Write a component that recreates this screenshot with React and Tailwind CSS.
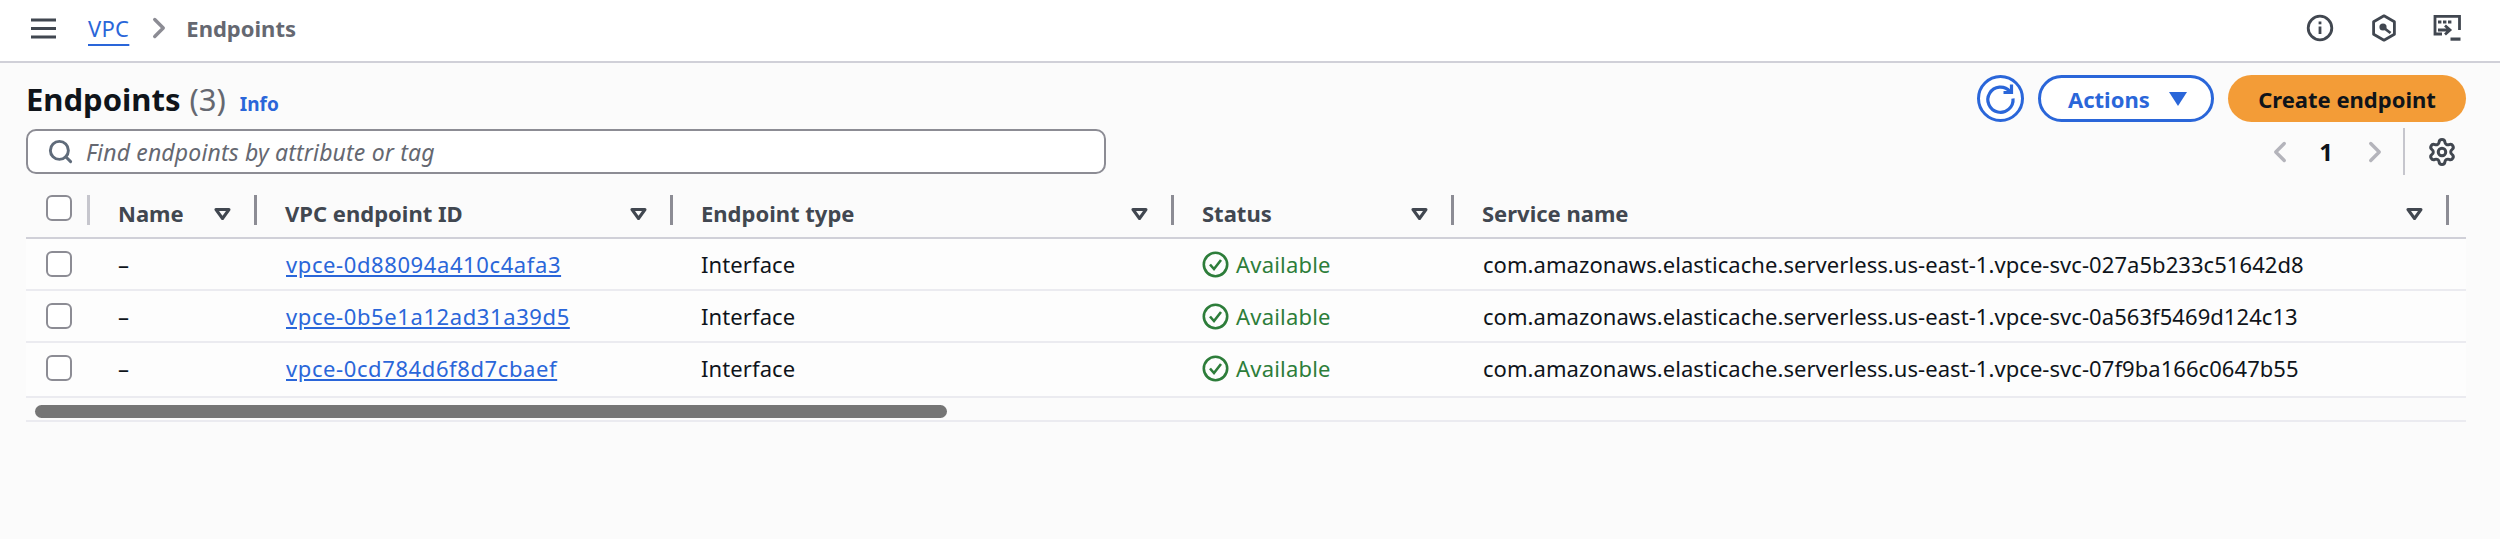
import React from "react";
import { Search, Settings, ChevronLeft, ChevronRight } from "lucide-react";

const rows = [
  { id: "vpce-0d88094a410c4afa3", svc: "com.amazonaws.elasticache.serverless.us-east-1.vpce-svc-027a5b233c51642d8" },
  { id: "vpce-0b5e1a12ad31a39d5", svc: "com.amazonaws.elasticache.serverless.us-east-1.vpce-svc-0a563f5469d124c13" },
  { id: "vpce-0cd784d6f8d7cbaef", svc: "com.amazonaws.elasticache.serverless.us-east-1.vpce-svc-07f9ba166c0647b55" },
];

const gridCols = "grid grid-cols-[64px_167px_416px_501px_280px_995px_17px]";

function Checkbox() {
  return <div className="w-[26px] h-[26px] ml-5 rounded-[6px] border-2 border-[#8c8c94] bg-white" />;
}

function SortIcon() {
  return (
    <svg width="17" height="12" viewBox="0 0 17 12" className="mr-[23px] shrink-0">
      <path d="M2 1.5h13L8.5 10.5z" fill="none" stroke="#414750" strokeWidth="3" strokeLinejoin="round" />
    </svg>
  );
}

function HeadCell({ label }) {
  return (
    <div className="flex items-center h-[38px]">
      <span className="flex-1 pl-[28px] font-bold text-[#414750] -mt-[2px]">{label}</span>
      <SortIcon />
      <div className="w-[3px] h-[30px] self-start bg-[#8c8c94]" />
    </div>
  );
}

function AvailableIcon() {
  return (
    <svg width="27" height="27" viewBox="0 0 27 27" className="shrink-0">
      <circle cx="13.5" cy="13.5" r="11.7" fill="none" stroke="#2d7d3a" strokeWidth="2.6" />
      <path d="M8 13.5l4 4.5 7-9" fill="none" stroke="#2d7d3a" strokeWidth="2.6" />
    </svg>
  );
}

function TopIcons() {
  return (
    <div className="flex items-center">
      <svg width="28" height="28" viewBox="0 0 28 28" className="mr-[38px]">
        <circle cx="14" cy="14" r="11.8" fill="none" stroke="#414750" strokeWidth="2.8" />
        <path d="M14 12.5v7.5" stroke="#414750" strokeWidth="2.8" />
        <rect x="12.6" y="7.5" width="2.8" height="2.8" fill="#414750" />
      </svg>
      <svg width="24" height="28" viewBox="0 0 24 28" className="mr-[37px]">
        <path d="M12 1.8L22.4 7.8V20.2L12 26.2L1.6 20.2V7.8Z" fill="none" stroke="#414750" strokeWidth="2.8" strokeLinejoin="round" />
        <circle cx="11" cy="13" r="3.6" fill="#414750" />
        <path d="M12 14l6.5 5" stroke="#414750" strokeWidth="2.8" />
      </svg>
      <svg width="28" height="28" viewBox="0 0 28 28">
        <path d="M9 20H2V2.4h24.5V16" fill="none" stroke="#414750" strokeWidth="2.8" />
        <path d="M5 6.5h3.4v3H5zM10 6.5h3.4v3H10zM15 6.5h3.4v3H15z" fill="#414750" />
        <path d="M5 16h11M12 11.5l5 4.5-5 4.5" fill="none" stroke="#414750" strokeWidth="2.8" />
        <rect x="17.5" y="23.5" width="10" height="3.2" fill="#414750" />
      </svg>
    </div>
  );
}

export default function App() {
  return (
    <div className="h-[539px] bg-[#fbfbfb] text-[22px] leading-[30px] text-[#0f141a] font-['Noto_Sans',sans-serif] overflow-hidden">
      <header className="h-[63px] bg-white border-b-2 border-[#d0d0d8] flex items-center pl-[31px] pr-[39px] pb-[5px]">
        <svg width="25" height="21" viewBox="0 0 25 21" className="mr-[32px]">
          <path d="M0 2h25M0 10.5h25M0 19h25" stroke="#414750" strokeWidth="3" />
        </svg>
        <a className="text-[#2a66d9] underline underline-offset-[7px] decoration-2 tracking-[0.3px] mr-[18px]">VPC</a>
        <ChevronRight size={34} strokeWidth={2.4} className="text-[#8c8c94] -mx-[8px] ml-[-5px]" />
        <span className="font-bold text-[#656871] ml-[18px]">Endpoints</span>
        <div className="ml-auto"><TopIcons /></div>
      </header>

      <div className="pl-[26px] pr-[34px] pt-[12px]">
        <div className="flex items-center justify-between h-[47px]">
          <div className="flex items-baseline">
            <h1 className="text-[31px] leading-[40px] font-bold">Endpoints</h1>
            <span className="text-[31px] leading-[40px] text-[#656871] ml-[9px]">(3)</span>
            <a className="text-[19px] font-bold text-[#2a66d9] ml-[14px]">Info</a>
          </div>
          <div className="flex items-center gap-[14px]">
            <div className="w-[47px] h-[47px] rounded-full border-[3px] border-[#2a66d9] bg-white flex items-center justify-center">
              <svg width="35" height="35" viewBox="0 0 35 35">
                <path d="M27 10.5A12.6 12.6 0 1 0 30 17.5" fill="none" stroke="#2a66d9" strokeWidth="3.2" />
                <path d="M28.5 3.5V11.5H20.5" fill="none" stroke="#2a66d9" strokeWidth="3.2" />
              </svg>
            </div>
            <button className="w-[176px] h-[47px] rounded-full border-[3px] border-[#2a66d9] bg-white font-bold text-[#2a66d9] flex items-center pl-[27px]">
              Actions
              <svg width="18" height="14" viewBox="0 0 18 14" className="ml-[19px]">
                <path d="M0 0h18L9 14z" fill="#2a66d9" />
              </svg>
            </button>
            <button className="w-[238px] h-[47px] rounded-full bg-[#f39c37] font-bold text-[#0f141a]">Create endpoint</button>
          </div>
        </div>

        <div className="flex items-start justify-between mt-[7px] h-[70px]">
          <div className="w-[1080px] h-[45px] rounded-[10px] border-2 border-[#8c8c94] bg-white flex items-center pl-[19px]">
            <Search size={27} strokeWidth={2.6} className="text-[#5f6b7a] shrink-0" />
            <span className="italic text-[23px] tracking-[0.15px] text-[#656871] ml-[12px]">Find endpoints by attribute or tag</span>
          </div>
          <div className="flex items-center h-[47px] mt-[-1px]">
            <ChevronLeft size={34} strokeWidth={2.4} className="text-[#b4b4bb]" />
            <span className="font-bold text-[24px] w-[50px] ml-[4px] text-center">1</span>
            <ChevronRight size={34} strokeWidth={2.4} className="text-[#b4b4bb] ml-[7px]" />
            <div className="w-[2px] h-[47px] bg-[#c6c6cd] ml-[11px]" />
            <Settings size={30} strokeWidth={2.4} className="text-[#414750] ml-[22px] mr-[9px]" />
          </div>
        </div>

        <div className="w-[2440px] -mt-[4px]">
          <div className={gridCols + " border-b-2 border-[#d0d0d8] h-[44px]"}>
            <div className="flex items-start justify-between h-[38px]">
              <Checkbox />
              <div className="w-[3px] h-[30px] bg-[#c6c6cd]" />
            </div>
            <HeadCell label="Name" />
            <HeadCell label="VPC endpoint ID" />
            <HeadCell label="Endpoint type" />
            <HeadCell label="Status" />
            <HeadCell label="Service name" />
          </div>
          {rows.map((r, i) => (
            <div key={r.id} className={gridCols + " items-center border-b-2 border-[#ebebf0] bg-[#fdfdfd] " + (i === 2 ? "h-[55px] pb-[3px]" : "h-[52px]")}>
              <Checkbox />
              <span className="pl-[28px]">–</span>
              <a className="pl-[29px] text-[#2a66d9] underline tracking-[0.6px]">{r.id}</a>
              <span className="pl-[28px] tracking-[0.1px]">Interface</span>
              <div className="pl-[28px] flex items-center gap-[7px] text-[#2d7d3a] tracking-[0.2px]">
                <AvailableIcon />
                Available
              </div>
              <span className="pl-[29px] whitespace-nowrap tracking-[0.06px]">{r.svc}</span>
            </div>
          ))}
          <div className="h-[24px] border-b-2 border-[#ebebf0] pt-[7px] pl-[9px]">
            <div className="w-[912px] h-[13px] rounded-full bg-[#757575]" />
          </div>
        </div>
      </div>
    </div>
  );
}
